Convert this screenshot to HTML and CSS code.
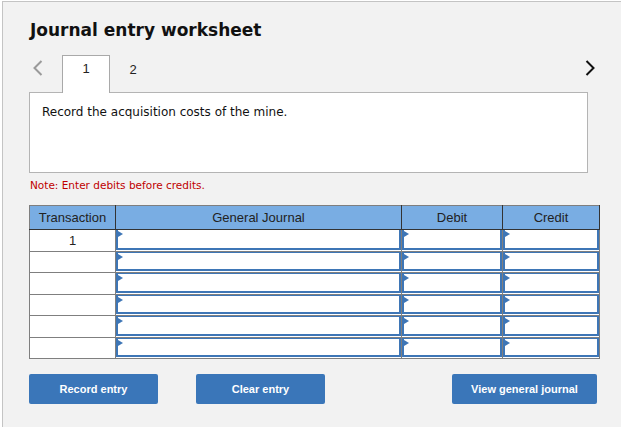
FILE: index.html
```html
<!DOCTYPE html>
<html lang="en">
<head>
<meta charset="UTF-8" />
<title>Journal entry worksheet</title>
<link rel="stylesheet" href="styles.css">
</head>
<body>

<div class="worksheet">
  <h1>Journal entry worksheet</h1>

  <div class="tabs">
    <span class="arrow prev">
      <svg width="10" height="16" viewBox="0 0 10 16"><polyline points="8.5,1 1.5,8 8.5,15" fill="none" stroke="#9a9a9a" stroke-width="2"/></svg>
    </span>
    <span class="tab active">1</span>
    <span class="tab">2</span>
    <span class="arrow next">
      <svg width="10" height="16" viewBox="0 0 10 16"><polyline points="1.5,1 8.5,8 1.5,15" fill="none" stroke="#111" stroke-width="2"/></svg>
    </span>
  </div>

  <div class="prompt">Record the acquisition costs of the mine.</div>

  <p class="note">Note: Enter debits before credits.</p>

  <table class="journal">
    <thead>
      <tr>
        <th class="col-tr">Transaction</th>
        <th class="col-gj">General Journal</th>
        <th class="col-dr">Debit</th>
        <th class="col-cr">Credit</th>
      </tr>
    </thead>
    <tbody>
      <tr><td class="num">1</td><td class="in"><div class="field"></div></td><td class="in"><div class="field"></div></td><td class="in"><div class="field"></div></td></tr>
      <tr><td class="num"></td><td class="in"><div class="field"></div></td><td class="in"><div class="field"></div></td><td class="in"><div class="field"></div></td></tr>
      <tr><td class="num"></td><td class="in"><div class="field"></div></td><td class="in"><div class="field"></div></td><td class="in"><div class="field"></div></td></tr>
      <tr><td class="num"></td><td class="in"><div class="field"></div></td><td class="in"><div class="field"></div></td><td class="in"><div class="field"></div></td></tr>
      <tr><td class="num"></td><td class="in"><div class="field"></div></td><td class="in"><div class="field"></div></td><td class="in"><div class="field"></div></td></tr>
      <tr><td class="num"></td><td class="in"><div class="field"></div></td><td class="in"><div class="field"></div></td><td class="in"><div class="field"></div></td></tr>
    </tbody>
  </table>

  <div class="actions">
    <button class="btn record">Record entry</button>
    <button class="btn clear">Clear entry</button>
    <button class="btn view">View general journal</button>
  </div>
</div>

</body>
</html>
```

FILE: styles.css
```css
body {
  margin: 1px 0 0 2px;
  background: #fff;
  font-family: 'DejaVu Sans', Verdana, sans-serif;
  color: #111;
}
.worksheet {
  background: #f2f2f2;
  border-top: 1px solid #c4c4c4;
  border-left: 1px solid #c4c4c4;
  height: 440px;
  padding: 0 0 0 26px;
}
h1 {
  margin: 0 0 0 1px;
  padding-top: 17px;
  font-size: 17px;
  line-height: 22px;
  font-weight: 700;
  color: #111;
}
.tabs {
  display: flex;
  align-items: stretch;
  height: 38px;
  margin-top: 13px;
  width: 559px;
  font-family: 'Liberation Sans', Arial, sans-serif;
}
.tab {
  width: 46px;
  display: flex;
  align-items: center;
  justify-content: center;
  padding-bottom: 7px;
  font-size: 13px;
  color: #222;
}
.tab.active {
  background: #fff;
  border: 1px solid #a9a9a9;
  border-bottom: none;
  padding-bottom: 12px;
  position: relative;
  top: 1px;
  z-index: 1;
}
.arrow {
  display: flex;
  align-items: center;
  padding-bottom: 10px;
}
.arrow.prev {
  width: 29px;
  padding-left: 4px;
}
.arrow.next {
  margin-left: auto;
  margin-right: -7px;
}
.prompt {
  width: 545px;
  height: 68px;
  background: #fff;
  border: 1px solid #b4b4b4;
  padding: 11px 0 0 12px;
  font-size: 12px;
  line-height: 16px;
  color: #111;
}
.note {
  margin: 6px 0 0 1px;
  font-size: 10.5px;
  line-height: 13px;
  color: #c00000;
}
.journal {
  margin-top: 13px;
  border-collapse: collapse;
  width: 570px;
  table-layout: fixed;
  font-family: 'Liberation Sans', Arial, sans-serif;
  font-size: 13px;
}
.journal th {
  background: #79ade3;
  color: #222;
  font-weight: 400;
  height: 23px;
  padding: 0;
  border: 1px solid #333;
  border-top-color: #7f7f7f;
}
.journal th:first-child { border-left-color: #7f7f7f; }
.col-tr { width: 85px; }
.col-gj { width: 285px; }
.col-dr { width: 100px; }
.col-cr { width: 96px; }
.journal td {
  border: 1px solid #7f7f7f;
  background: #fff;
  height: 20.5px;
  padding: 0;
}
.journal td.num {
  text-align: center;
  color: #222;
}
.journal td.in { vertical-align: top; }
.field {
  position: relative;
  height: 16.5px;
  border: 2px solid #3e76b6;
  border-top-width: 1px;
}
tbody tr:first-child .field { border-top: none; height: 17.5px; }
.field::before {
  content: '';
  position: absolute;
  left: 0;
  top: 1px;
  border-left: 5px solid #3e76b6;
  border-top: 3px solid transparent;
  border-bottom: 3px solid transparent;
}
.actions {
  display: flex;
  width: 570px;
  margin-top: 15px;
}
.btn {
  height: 30px;
  background: #3a76b9;
  color: #fff;
  border: none;
  border-radius: 2px;
  font-family: 'Liberation Sans', Arial, sans-serif;
  font-size: 11px;
  font-weight: 700;
  padding: 0;
}
.record { width: 129px; }
.clear { width: 129px; margin-left: 38px; }
.view { width: 145px; margin-left: auto; margin-right: 2px; }
```
